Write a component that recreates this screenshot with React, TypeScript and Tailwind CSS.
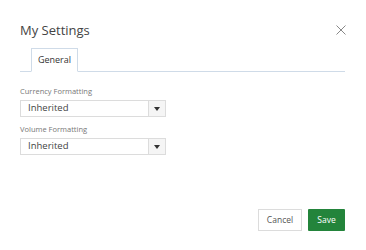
const fields = ["Currency Formatting", "Volume Formatting"];

function SelectBox({ value }: { value: string }) {
  return (
    <div className="flex h-[17px] w-[146px] border border-[#dcdcdc] bg-white">
      <div className="flex flex-1 items-center pl-[7px] text-[9.5px] text-[#444]">{value}</div>
      <div className="flex w-[17px] items-center justify-center border-l border-[#dcdcdc] bg-[#f5f5f5]">
        <svg width="6" height="4" viewBox="0 0 6 4">
          <path d="M0 0h6L3 4z" fill="#333" />
        </svg>
      </div>
    </div>
  );
}

export default function App() {
  return (
    <div className="h-[250px] w-[366px] bg-white pl-5 pr-[21px] font-['Open_Sans',sans-serif]">
      <div className="flex items-center justify-between pt-[21px]">
        <h1 className="text-[13px] leading-[18px] text-[#444]">My Settings</h1>
        <svg width="10" height="10" viewBox="0 0 10 10" className="mr-[-1px]">
          <path d="M0.5 0.5l9 9M9.5 0.5l-9 9" stroke="#888" strokeWidth="1" />
        </svg>
      </div>
      <div className="mt-[9px] flex border-b border-[#cfdbe8] pl-[11px]">
        <div className="-mb-px flex h-[24px] w-[47px] items-center justify-center border border-b-white border-[#cfdbe8] bg-white text-[9px] text-[#333]">
          General
        </div>
      </div>
      <div className="mt-[14px] flex flex-col gap-[7px]">
        {fields.map((label) => (
          <div key={label} className="flex flex-col gap-[4px]">
            <span className="text-[7.5px] leading-[10px] text-[#777]">{label}</span>
            <SelectBox value="Inherited" />
          </div>
        ))}
      </div>
      <div className="mt-[54px] flex justify-end gap-[6px]">
        <button className="h-[22px] w-[44px] border border-[#dcdcdc] bg-white text-[8.5px] text-[#555]">Cancel</button>
        <button className="h-[22px] w-[37px] rounded-[1px] bg-[#23843b] text-[8.5px] text-white">Save</button>
      </div>
    </div>
  );
}
